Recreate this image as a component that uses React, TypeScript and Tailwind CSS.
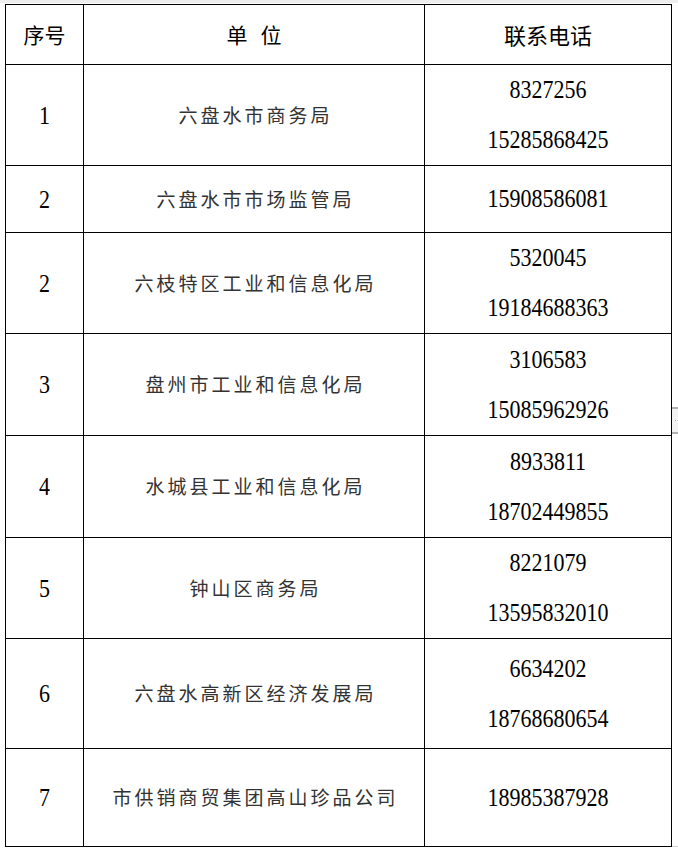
import React from "react";

type Row = { no: string; unit: string; phones: string[]; h: string };

const rows: Row[] = [
  { no: "1", unit: "六盘水市商务局", phones: ["8327256", "15285868425"], h: "h-[101px]" },
  { no: "2", unit: "六盘水市市场监管局", phones: ["15908586081"], h: "h-[67px]" },
  { no: "2", unit: "六枝特区工业和信息化局", phones: ["5320045", "19184688363"], h: "h-[101px]" },
  { no: "3", unit: "盘州市工业和信息化局", phones: ["3106583", "15085962926"], h: "h-[102px]" },
  { no: "4", unit: "水城县工业和信息化局", phones: ["8933811", "18702449855"], h: "h-[102px]" },
  { no: "5", unit: "钟山区商务局", phones: ["8221079", "13595832010"], h: "h-[101px]" },
  { no: "6", unit: "六盘水高新区经济发展局", phones: ["6634202", "18768680654"], h: "h-[110px]" },
  { no: "7", unit: "市供销商贸集团高山珍品公司", phones: ["18985387928"], h: "h-[98px]" },
];

const serif = "font-['Liberation_Serif','Times_New_Roman',serif]";
const cjk = "font-['Noto_Sans_CJK_SC','Noto_Sans',sans-serif]";

export default function App() {
  return (
    <div className="relative w-[678px] h-[849px] bg-white overflow-hidden">
      <div className="h-[3px] bg-[#eeeeee]" />
      <div className="pl-[5px] pt-[1px]">
        <div className="w-[667px] border-r border-b border-black">
          <div className="flex h-[60px]">
            <div className={`w-[78px] border-l border-t border-black flex items-center justify-center text-[21px] text-black ${cjk}`}>
              序号
            </div>
            <div className={`w-[341px] border-l border-t border-black flex items-center justify-center gap-[13px] text-[21px] text-black ${cjk}`}>
              <span>单</span>
              <span>位</span>
            </div>
            <div className={`w-[247px] border-l border-t border-black flex items-center justify-center text-[22px] text-black ${cjk}`}>
              联系电话
            </div>
          </div>
          {rows.map((r, i) => (
            <div key={i} className={`flex ${r.h}`}>
              <div className={`w-[78px] border-l border-t border-black flex items-center justify-center text-[22px] text-black ${serif}`}>
                <span className="scale-y-[1.12]">{r.no}</span>
              </div>
              <div className={`w-[341px] border-l border-t border-black flex items-center justify-center text-[19px] tracking-[3px] text-[#333333] ${cjk}`}>
                <span className="mr-[-3px]">{r.unit}</span>
              </div>
              <div className={`w-[247px] border-l border-t border-black flex flex-col items-center justify-center text-[22px] leading-[50px] text-black ${serif}`}>
                {r.phones.map((p) => (
                  <div key={p} className="scale-y-[1.12]">{p}</div>
                ))}
              </div>
            </div>
          ))}
        </div>
      </div>
      <div className="absolute left-[672px] top-[407px] w-[6px] h-[27px] bg-[#f3f3f3] border-t-2 border-b-2 border-[#b0b0b0]">
        <div className="absolute left-[3px] top-[11px] w-[1px] h-[1px] bg-[#999999]" />
      </div>
      <div className="absolute left-[672px] top-[846px] w-[6px] h-[1px] bg-[#d0d0d0]" />
    </div>
  );
}
